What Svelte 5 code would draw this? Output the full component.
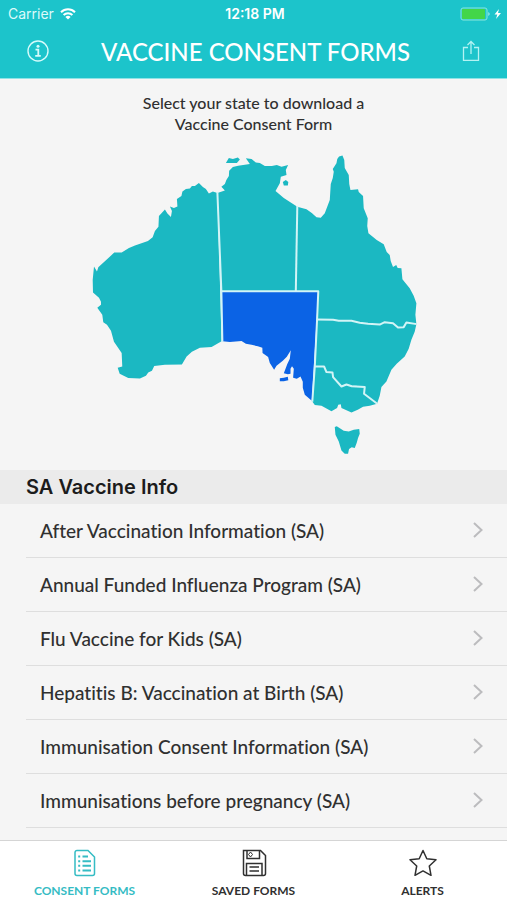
<script>
    let selected = 'SA'
    let tab = 'consent'

    const states = [
        { id: 'WA', d: 'M217.5 193 213 191.5 209 193.5 206 189 203 187 199 183 195 186 192 186 190 188.5 186 189 182.5 191.5 181.5 196 177 199 177.5 206.5 174 208 170 206.5 172 211 171 217 167.5 213.5 165 209.5 159 216 158.5 226.7 155 231 152.7 237.3 148 241 135 245.7 129 248 121.7 252.7 114.3 252.7 98.3 267.3 97 271.7 94 266.7 92.7 280 93 292.7 99 298 101 302 101 305 97.3 308 102.3 315 103.3 322.3 107 325 111 331 114 342 121.7 353.3 122.3 366.7 117.7 368 119.7 374 128.3 378.3 140 378.7 146 376 148.3 372.7 152 371 154.3 366.3 165 365 182 364.7 186.7 356.7 192 352 200 348 211.7 347.3 221.7 341.5Z' },
        { id: 'NT', d: 'M217.5 193 225 190.5 221.5 186.7 225 184 226.5 180 229 176 229.3 170.7 233 167 238.3 165.7 250 164 246 158.3 251.7 159 256 162.5 260 163 265 166 272 166 277 165 281.7 166.7 288.3 165 286 170 286.7 175 281 176.7 280 183.3 275.7 191 284 198 297.5 206.7 296 291.5 221.5 291.5ZM226 163 229 158 233 159 238 157.5 240 159.5 237 163ZM283 182 286 180 288.5 182 288 185.5 284 185.5Z' },
        { id: 'QLD', d: 'M297.5 206.7 306.7 209.3 312 213 316.7 217.3 321 217.8 325 213.3 330 200 331 184 333 178 334 171.7 333 169 336.7 163.3 337.5 159 339.3 156.5 342.7 155.5 344.5 160 345 168 349 175 349.5 184 350.7 190 358.3 189.3 359 192 363.3 196 364 208.3 368 218.3 367.5 226 368.7 233.3 377 240 384 244.3 387 252 390 255 391 261 393.3 267 396.5 265 398 268 401.7 268.3 402.7 279.3 410 288.3 414 296 416.7 303.5 415.7 315 416.7 324.3 406.7 322.7 404 327.3 398.3 327.7 393.3 323.3 385 322.3 380 324.7 368.3 324 351.7 321 333.3 320 317.3 319.7 318.5 291.5 296 291.5Z' },
        { id: 'NSW', d: 'M416.7 324.3 415 332 411.7 340 409 349 405 356.7 397 364 391.7 370 386.7 381.7 381.7 387.3 380 396 377.3 404 364.3 394 365 387.3 346.7 384.7 341.7 386.7 333.3 377.3 332.7 372.7 326.7 372.3 324.3 366.7 315 366.7 317.3 319.7 333.3 320 351.7 321 368.3 324 380 324.7 385 322.3 393.3 323.3 398.3 327.7 404 327.3 406.7 322.7Z' },
        { id: 'VIC', d: 'M377.3 404 370 406 363.3 407 358 410 351.7 412.7 341.7 408.3 341 404.5 338.5 405 337.3 408.3 331.7 411.5 321.7 406 315 405.3 312.5 401.7 315 366.7 324.3 366.7 326.7 372.3 332.7 372.7 333.3 377.3 341.7 386.7 346.7 384.7 365 387.3 364.3 394Z' },
        { id: 'SA', d: 'M221.5 291.5 318.5 291.5 312 401 305 395 303 388 303 382 300.7 376.7 297 379 293.3 378 294 369 292.2 366.5 290.7 369 290.7 374 288 374.5 284 373.5 287.5 364.3 290 359 291 350.5 287 357 283 361 276.7 366 274.3 370 270 363.3 268.3 357.3 262.7 353.3 262.5 348 258 346.5 251.7 345 246 344 241.7 341.3 230 342.3 222.5 341.5ZM280 378.5 284 378 288 377 288.5 380.5 284 381.5 280 381.5Z' },
        { id: 'TAS', d: 'M335 427.3 337 426.5 344 431 349 431.7 354 430 359.5 429.3 360 434 358.3 438.3 357 443 355 448.3 352 447.5 349.3 449.3 348.3 454 345 454 341.7 450.7 339 441.7 335.7 435Z' }
    ]

    const forms = [
        'After Vaccination Information',
        'Annual Funded Influenza Program',
        'Flu Vaccine for Kids',
        'Hepatitis B: Vaccination at Birth',
        'Immunisation Consent Information',
        'Immunisations before pregnancy'
    ]
</script>

<div class="app">
    <header>
        <div class="status">
            <span class="carrier">Carrier
                <svg width="16" height="12" viewBox="0 0 16 12" fill="none" stroke="#fff" stroke-width="2">
                    <path d="M1 4.2a10 10 0 0 1 14 0M3.6 7a6.2 6.2 0 0 1 8.8 0" />
                    <path d="M8 11.6 5.4 9a3.7 3.7 0 0 1 5.2 0z" fill="#fff" stroke="none" />
                </svg>
            </span>
            <span class="time">12:18 PM</span>
            <span class="battery">
                <svg width="42" height="14" viewBox="0 0 42 14">
                    <rect x="1" y="1" width="26" height="12" rx="2" fill="none" stroke="#8be8dc" />
                    <rect x="2" y="2" width="23" height="10" rx="1" fill="#43d649" />
                    <path d="M28.5 5v4q2-2 0-4z" fill="#d8fafa" />
                    <path d="M39 2 34.5 7.5h2.8L36 12l5-6h-3z" fill="#fff" />
                </svg>
            </span>
        </div>
        <div class="nav">
            <button aria-label="Info">
                <svg width="22" height="22" viewBox="0 0 22 22" fill="none" stroke="#d6fbfb" stroke-width="1.4">
                    <circle cx="11" cy="11" r="10" />
                    <circle cx="11" cy="6.3" r="1.5" fill="#d6fbfb" stroke="none" />
                    <path d="M8.500 9.700h2.800v6M8.200 15.800h5.600" stroke-width="1.8" />
                </svg>
            </button>
            <h1>VACCINE CONSENT FORMS</h1>
            <button aria-label="Share">
                <svg width="18" height="22" viewBox="0 0 18 22" fill="none" stroke="#b4f3f3" stroke-width="1.3">
                    <path d="M6 7.500H1.500v12.800h15V7.500H12M9 14V1.500M5.500 5 9 1.500 12.500 5" />
                </svg>
            </button>
        </div>
    </header>

    <main>
        <p>Select your state to download a<br>Vaccine Consent Form</p>
        <svg class="map" viewBox="84 150 340 310">
            {#each states as s}
                <a href="#{s.id}" aria-label={s.id} on:click|preventDefault={() => selected = s.id}>
                    <path d={s.d} class:active={selected === s.id} />
                </a>
            {/each}
            <g class="borders">
                <path d="M217.5 192 221.5 291.5 222.5 342" />
                <path d="M297.5 206 296 291.5" />
                <path d="M221.5 291.5H318.5L317.3 319.7 315 366.7 312.5 402" />
                <path d="M317.3 319.7 333.3 320 339 321 351.7 321 360 323 368.3 324 380 324.7 385 322.3 393.3 323.3 398.3 327.7 404 327.3 406.7 322.7 417 324.3" />
                <path d="M315 366.7 324.3 366.7 326.7 372.3 332.7 372.7 333.3 377.3 341.7 386.7 346.7 384.7 352 386.5 365 387.3 364.3 394 377.5 404" />
            </g>
        </svg>

        <h2>{selected} Vaccine Info</h2>
        <ul>
            {#each forms as form}
                <li>
                    <a href="#form">
                        {form} ({selected})
                        <svg width="10" height="16" viewBox="0 0 10 16" fill="none" stroke="#bcbcbe" stroke-width="2">
                            <path d="m1 1 7.5 7L1 15" />
                        </svg>
                    </a>
                </li>
            {/each}
        </ul>
    </main>

    <footer>
        <button class:current={tab === 'consent'} on:click={() => tab = 'consent'}>
            <svg width="28" height="28" viewBox="0 0 28 28" fill="none" stroke="currentColor" stroke-width="1.5">
                <path d="M6 1.5h11l6.5 6.5v16.5a2 2 0 0 1-2 2H6a2 2 0 0 1-2-2v-21a2 2 0 0 1 2-2z" />
                <path d="M11.5 7.5h5.5M11.5 12.2h8.5M11.5 16.8h8.5M11.5 21.4h8.5M7.2 7.5h2M7.2 12.2h2M7.2 16.8h2M7.2 21.4h2" stroke-width="2" />
            </svg>
            CONSENT FORMS
        </button>
        <button class:current={tab === 'saved'} on:click={() => tab = 'saved'}>
            <svg width="28" height="28" viewBox="0 0 28 28" fill="none" stroke="currentColor" stroke-width="1.5">
                <path d="M3.5 1.5h17l5 5v18a2 2 0 0 1-2 2h-18a2 2 0 0 1-2-2z" />
                <path d="M7 1.5v8h12.5v-8M6.5 26.5v-12h15.5v12M9.5 18h9.5M9.5 22h9.5" />
                <path d="M10.5 3 12.500 5.500 10.500 8 8.500 5.500z" stroke-width="1" />
            </svg>
            SAVED FORMS
        </button>
        <button class:current={tab === 'alerts'} on:click={() => tab = 'alerts'}>
            <svg width="28" height="28" viewBox="0 0 28 28" fill="none" stroke="currentColor" stroke-width="1.5" stroke-linejoin="round">
                <path d="M14 1.5 17.8 9.7 27 10.8 20.3 17 22 26.3 14 21.9 6 26.3 7.7 17 1 10.8 10.2 9.7z" />
            </svg>
            ALERTS
        </button>
    </footer>
</div>

<style>
    :global(body) {
        background: #f5f5f5;
    }
    .app {
        height: 100vh;
        display: flex;
        flex-direction: column;
        font-family: Lato, "Liberation Sans", sans-serif;
        font-variant-ligatures: none;
        color: #303030;
    }
    header {
        background: #1cc4cb;
        color: #fff;
        border-bottom: 1px solid #8fe3e6;
    }
    .status {
        display: grid;
        grid-template-columns: 1fr auto 1fr;
        align-items: center;
        height: 28px;
        padding: 0 5px 0 8px;
        font: 14px/28px Inter, "Liberation Sans", sans-serif;
    }
    .carrier {
        display: flex;
        align-items: center;
        gap: 6px;
        color: #dcfafa;
    }
    .time {
        font-weight: 600;
    }
    .battery {
        display: flex;
        justify-content: flex-end;
    }
    .nav {
        display: flex;
        align-items: center;
        justify-content: space-between;
        height: 46px;
        padding: 0 27px 4px;
    }
    button {
        border: 0;
        padding: 0;
        background: none;
        font-family: inherit;
        color: inherit;
        cursor: pointer;
    }
    .nav button {
        display: flex;
    }
    h1 {
        margin: 0;
        font-size: 24px;
        font-weight: 500;
    }
    main {
        flex: 1;
        min-height: 0;
        overflow: hidden auto;
        scrollbar-width: none;
    }
    p {
        margin: 13px 0 16px;
        text-align: center;
        font-size: 16px;
        line-height: 21px;
        font-weight: 500;
    }
    .map {
        display: block;
        width: 67%;
        margin: 0 auto 10px;
    }
    .map a path {
        fill: #1bb8c2;
    }
    .map a path.active {
        fill: #0b63e5;
    }
    .borders {
        fill: none;
        stroke: #d3f4f6;
        stroke-width: 2;
        stroke-linejoin: round;
        pointer-events: none;
    }
    h2 {
        margin: 0;
        padding-left: 26px;
        background: #ebebeb;
        color: #1c1c1c;
        font: 600 20px/34px Inter, "Liberation Sans", sans-serif;
    }
    ul {
        margin: 0;
        padding: 0 0 0 26px;
        list-style: none;
    }
    li {
        border-bottom: 1px solid #dedede;
    }
    li a {
        display: flex;
        align-items: center;
        justify-content: space-between;
        height: 53px;
        padding: 0 24px 0 14px;
        color: inherit;
        text-decoration: none;
        font-size: 19px;
        font-weight: 500;
    }
    footer {
        display: grid;
        grid-template-columns: repeat(3, 1fr);
        height: 59px;
        background: #fff;
        border-top: 1px solid #d5d5d5;
    }
    footer button {
        display: flex;
        flex-direction: column;
        align-items: center;
        gap: 6px;
        padding-top: 8px;
        font-size: 12px;
        line-height: 16px;
        font-weight: 700;
    }
    footer .current {
        color: #35bcc4;
    }
</style>
